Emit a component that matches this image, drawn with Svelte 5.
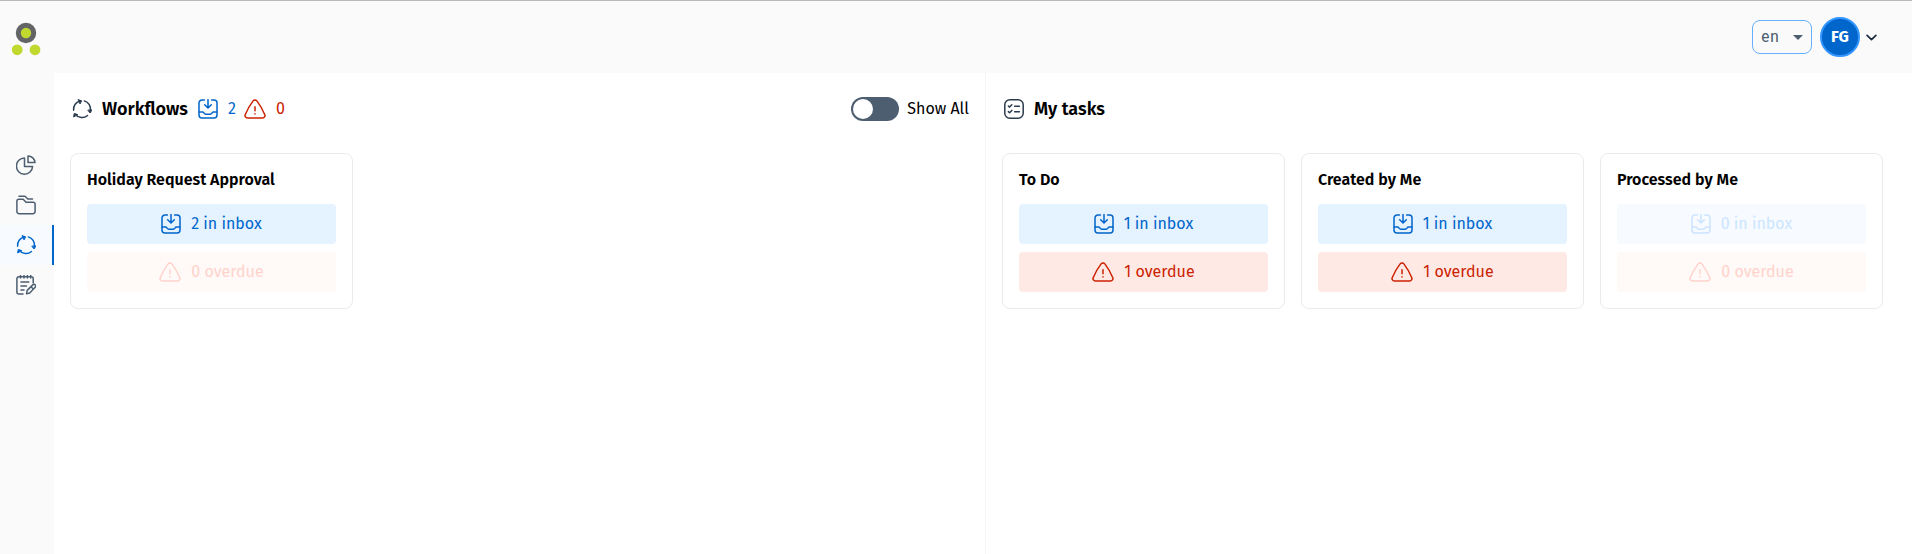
<script lang="ts">
	let language = $state('en');
	let showAll = $state(false);

	const navigation = [
		{ name: 'Dashboard', href: '#dashboard', icon: 'chart', active: false },
		{ name: 'Documents', href: '#documents', icon: 'folder', active: false },
		{ name: 'Workflows', href: '#workflows', icon: 'cycle', active: true },
		{ name: 'Forms', href: '#forms', icon: 'note', active: false }
	];

	const workflows = [{ name: 'Holiday Request Approval', inbox: 2, overdue: 0 }];

	const tasks = [
		{ name: 'To Do', inbox: 1, overdue: 1 },
		{ name: 'Created by Me', inbox: 1, overdue: 1 },
		{ name: 'Processed by Me', inbox: 0, overdue: 0 }
	];

	const totalInbox = $derived(workflows.reduce((sum, w) => sum + w.inbox, 0));
	const totalOverdue = $derived(workflows.reduce((sum, w) => sum + w.overdue, 0));
</script>

{#snippet icon(name: string)}
	<svg class="icon" class:wide={name === 'warning'} viewBox={name === 'warning' ? '0 0 22 20' : '0 0 20 20'} aria-hidden="true">
		{#if name === 'chart'}
			<path d="M8.5 3A8.1 8.1 0 1 0 16.6 11.5H8.5Z" />
			<path d="M12 .9V7.6H19A7 7 0 0 0 12 .9Z" />
		{:else if name === 'folder'}
			<path d="M.9 16.5V6.2A1.9 1.9 0 0 1 2.8 4.3H7.2L10 7.3H17.2A1.9 1.9 0 0 1 19.1 9.2V16.5A2.2 2.2 0 0 1 16.9 18.7H3.1A2.2 2.2 0 0 1 .9 16.5Z" />
			<path d="M3 1.3H9L11.8 4H16.5" />
		{:else if name === 'cycle'}
			<path d="M1.6 11.2A8.4 8.4 0 0 1 8.4 1.9" />
			<path d="M12.3 1.9A8.4 8.4 0 0 1 18.4 11.3" />
			<path d="M15.5 16.5A8.4 8.4 0 0 1 3.4 15.5" />
			<path class="head" d="M6.4.7L9.6 1.8 8.2 4.6Z" />
			<path class="head" d="M16 11.4L18.1 14 19.7 11.2Z" />
			<path class="head" d="M1.7 17.6L2.2 14.5 5.4 15.5Z" />
		{:else if name === 'note'}
			<path d="M17.2 8V3.8A2 2 0 0 0 15.2 1.8H2.9A2 2 0 0 0 .9 3.8V17A2 2 0 0 0 2.9 19H7" />
			<path d="M4.5.5V3M8 .5V3M11.4 .5V3M14.7 .5V3M4.9 7H12.8M4.9 11H10.5M4.9 15H8" />
			<path d="M10.5 18.8L11.2 15.4 16.8 9.9A1.6 1.6 0 0 1 19.2 12.3L13.7 18ZM15 11.8L17.3 14" />
		{:else if name === 'inbox'}
			<path d="M6.4 1H4A3 3 0 0 0 1 4V16A3 3 0 0 0 4 19H16A3 3 0 0 0 19 16V4A3 3 0 0 0 16 1H13.6" />
			<path d="M10 .6V8.7M6.7 5.7L10 9 13.3 5.7" />
			<path d="M1 13H4.5C6 13 6.2 15.2 7.7 15.2H12.3C13.8 15.2 14 13 15.5 13H19" />
		{:else if name === 'warning'}
			<path d="M9.1 1.9A2.3 2.3 0 0 1 12.9 1.9C16 6 18.8 11 20.8 15.7A2.4 2.4 0 0 1 18.6 19H3.4A2.4 2.4 0 0 1 1.2 15.7C3.2 11 6 6 9.1 1.9Z" />
			<path d="M11 7.7V11.7M11 14.7V15" />
		{:else if name === 'tasks'}
			<rect x=".8" y=".8" width="18.4" height="18.4" rx="5" />
			<path d="M4.4 7L5.6 8.1 7.8 5.8M4.4 12.6L5.6 13.7 7.8 11.4M10.6 7.2H15.4M10.6 12.8H15.4" />
		{/if}
	</svg>
{/snippet}

{#snippet card(item: { name: string; inbox: number; overdue: number })}
	<article class="card">
		<h3>{item.name}</h3>
		<button class="count inbox" disabled={item.inbox === 0}>
			{@render icon('inbox')}
			<span>{item.inbox} in inbox</span>
		</button>
		<button class="count overdue" disabled={item.overdue === 0}>
			{@render icon('warning')}
			<span>{item.overdue} overdue</span>
		</button>
	</article>
{/snippet}

<div class="app">
	<header class="topbar">
		<a class="logo" href="#home" aria-label="Home">
			<svg viewBox="0 0 30 38" aria-hidden="true">
				<circle cx="15" cy="15" r="7.7" fill="#c1d82f" stroke="#636466" stroke-width="5" />
				<circle cx="6.2" cy="31.8" r="5.4" fill="#c1d82f" />
				<circle cx="24" cy="31.8" r="5.4" fill="#c1d82f" />
			</svg>
		</a>
		<div class="account">
			<div class="language">
				<select bind:value={language} aria-label="Language">
					<option value="en">en</option>
					<option value="de">de</option>
				</select>
				<svg viewBox="0 0 10 5" aria-hidden="true"><path d="M0 0H10L5 5Z" /></svg>
			</div>
			<button class="user" aria-label="User menu">
				<span class="avatar">FG</span>
				<svg viewBox="0 0 10 6" aria-hidden="true"><path d="M1 1L5 5 9 1" /></svg>
			</button>
		</div>
	</header>

	<div class="body">
		<nav class="sidebar">
			{#each navigation as item (item.name)}
				<a href={item.href} class:active={item.active} aria-label={item.name}>
					{@render icon(item.icon)}
				</a>
			{/each}
		</nav>

		<main>
			<section class="panel">
				<div class="panel-header">
					{@render icon('cycle')}
					<h2>Workflows</h2>
					<span class="total blue">{@render icon('inbox')}{totalInbox}</span>
					<span class="total red">{@render icon('warning')}{totalOverdue}</span>
					<label class="toggle">
						<input type="checkbox" role="switch" bind:checked={showAll} />
						<span>Show All</span>
					</label>
				</div>
				<div class="cards">
					{#each workflows as workflow (workflow.name)}
						{@render card(workflow)}
					{/each}
				</div>
			</section>

			<section class="panel">
				<div class="panel-header">
					{@render icon('tasks')}
					<h2>My tasks</h2>
				</div>
				<div class="cards">
					{#each tasks as task (task.name)}
						{@render card(task)}
					{/each}
				</div>
			</section>
		</main>
	</div>
</div>

<style>
	:global(body) {
		background: #fff;
	}

	.app {
		display: flex;
		flex-direction: column;
		box-sizing: border-box;
		min-height: 100vh;
		border-top: 1px solid #b8b8b8;
		font-family: 'Fira Sans', 'Noto Sans', 'Open Sans', sans-serif;
		font-size: 16px;
		line-height: 20px;
		color: #000;
	}

	button,
	select {
		font: inherit;
		cursor: pointer;
	}

	h2,
	h3 {
		margin: 0;
	}

	.icon {
		width: 20px;
		height: 20px;
		flex: none;
		fill: none;
		stroke: currentColor;
		stroke-width: 1.5;
		stroke-linecap: round;
		stroke-linejoin: round;
	}

	.icon.wide {
		width: 22px;
	}

	.icon .head {
		fill: currentColor;
		stroke-width: 1;
	}

	/* Top bar */
	.topbar {
		display: flex;
		align-items: center;
		justify-content: space-between;
		height: 72px;
		padding: 0 35px 0 11px;
		background: #fafafa;
	}

	.logo svg {
		display: block;
		width: 30px;
		height: 38px;
	}

	.account {
		display: flex;
		align-items: center;
		gap: 8px;
	}

	.language {
		position: relative;
	}

	.language select {
		appearance: none;
		display: block;
		width: 60px;
		height: 34px;
		padding: 0 24px 0 8px;
		border: 1px solid #66b0ff;
		border-radius: 8px;
		background: transparent;
		color: #4d5e70;
	}

	.language svg {
		position: absolute;
		top: 15px;
		right: 9px;
		width: 10px;
		height: 5px;
		fill: #4d5e70;
		pointer-events: none;
	}

	.user {
		display: flex;
		align-items: center;
		gap: 6px;
		padding: 0;
		border: 0;
		background: none;
	}

	.user svg {
		width: 11px;
		height: 7px;
		fill: none;
		stroke: #1b2b3d;
		stroke-width: 1.5;
		stroke-linecap: round;
		stroke-linejoin: round;
	}

	.avatar {
		display: grid;
		place-items: center;
		box-sizing: border-box;
		width: 40px;
		height: 40px;
		border: 2px solid #3395ff;
		border-radius: 50%;
		background: #0066cc;
		color: #fff;
		font-weight: 700;
	}

	/* Sidebar */
	.body {
		display: flex;
		flex: 1;
	}

	.sidebar {
		flex: none;
		width: 54px;
		padding-top: 72px;
		background: #fafafa;
	}

	.sidebar a {
		display: flex;
		align-items: center;
		justify-content: center;
		height: 40px;
		border-right: 2px solid transparent;
		color: #4d5e70;
	}

	.sidebar a.active {
		border-color: #0066cc;
		background: #f7fbff;
		color: #0066cc;
	}

	/* Panels */
	main {
		display: grid;
		grid-template-columns: calc(50% + 3px) 1fr;
		flex: 1;
	}

	.panel {
		min-width: 0;
		padding: 0 16px;
	}

	.panel:first-child {
		border-right: 1px solid #f5f5f5;
	}

	.panel-header {
		display: flex;
		align-items: center;
		height: 72px;
		margin-bottom: 8px;
		padding-left: 2px;
		color: #2a3b4d;
	}

	.panel-header h2 {
		margin: 0 10px;
		font-size: 18px;
		font-weight: 600;
		color: #000;
	}

	.total {
		display: flex;
		align-items: center;
		gap: 10px;
		margin-right: 8px;
	}

	.total.blue {
		color: #0066cc;
	}

	.total.red {
		color: #cc2200;
	}

	.toggle {
		display: flex;
		align-items: center;
		gap: 8px;
		margin-left: auto;
		color: #000;
		cursor: pointer;
	}

	.toggle input {
		appearance: none;
		width: 48px;
		height: 24px;
		margin: 0;
		padding: 2px;
		box-sizing: border-box;
		border-radius: 12px;
		background: #4d5e70;
		cursor: pointer;
	}

	.toggle input::before {
		content: '';
		display: block;
		width: 20px;
		height: 20px;
		border-radius: 50%;
		background: #fff;
	}

	.toggle input:checked {
		background: #0066cc;
	}

	.toggle input:checked::before {
		margin-left: auto;
	}

	/* Cards */
	.cards {
		display: grid;
		grid-template-columns: repeat(auto-fill, 283px);
		gap: 16px;
	}

	.card {
		display: flex;
		flex-direction: column;
		box-sizing: border-box;
		gap: 8px;
		padding: 16px;
		border: 1px solid #ebebeb;
		border-radius: 8px;
	}

	.card h3 {
		margin-bottom: 6px;
		font-size: 16px;
		font-weight: 600;
	}

	.count {
		display: flex;
		align-items: center;
		justify-content: center;
		gap: 10px;
		height: 40px;
		padding: 0;
		border: 0;
		border-radius: 4px;
	}

	.count.inbox {
		background: #e5f2ff;
		color: #0066cc;
	}

	.count.overdue {
		background: #ffe9e5;
		color: #cc2200;
	}

	.count:disabled {
		cursor: default;
	}

	.count.inbox:disabled {
		background: #f7fbff;
		color: #cce5ff;
	}

	.count.overdue:disabled {
		background: #fff9f7;
		color: #ffd3cc;
	}
</style>
